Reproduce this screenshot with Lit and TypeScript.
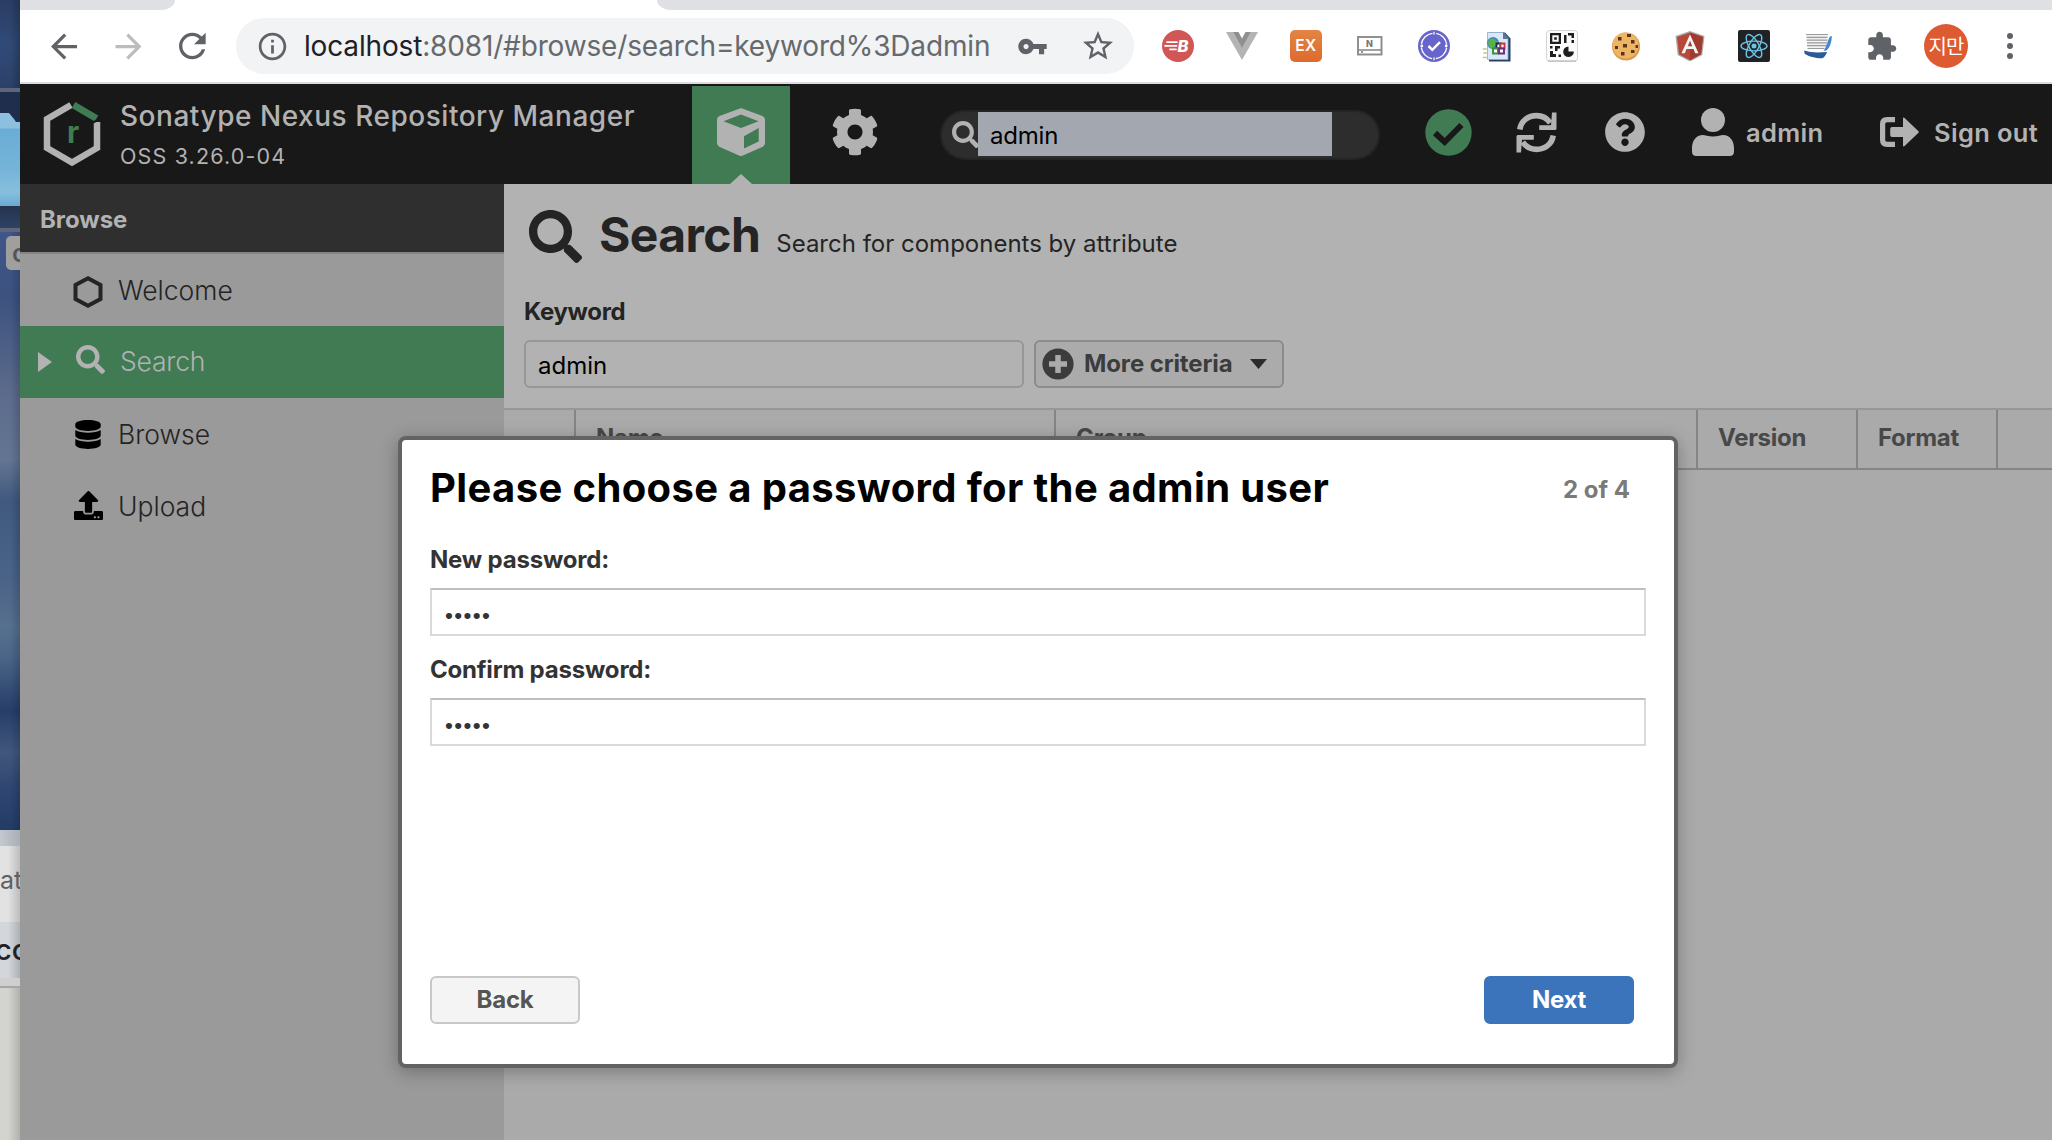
import { LitElement, html, css, svg } from "lit";
import { customElement, property } from "lit/decorators.js";
import { classMap } from "lit/directives/class-map.js";

const SEARCH_PATH =
  "M505 442.7L405.3 343c-4.5-4.5-10.6-7-17-7H372c27.6-35.3 44-79.7 44-128C416 93.1 322.9 0 208 0S0 93.1 0 208s93.1 208 208 208c48.3 0 92.7-16.4 128-44v16.3c0 6.4 2.5 12.5 7 17l99.7 99.7c9.4 9.4 24.6 9.4 33.9 0l28.3-28.3c9.4-9.4 9.4-24.6.1-34zM208 336c-70.7 0-128-57.2-128-128 0-70.7 57.2-128 128-128 70.7 0 128 57.2 128 128 0 70.7-57.2 128-128 128z";

const searchIcon = html`<svg viewBox="0 0 512 512"><path fill="currentColor" d=${SEARCH_PATH} /></svg>`;

const extensions = [
  // red badge with speed lines
  html`<svg width="32" height="32" viewBox="0 0 32 32"><circle cx="16" cy="16" r="16" fill="#d15757" />
    <path d="M5 12.2h10M3 15.8h11.5M8 19.4h6" stroke="#fff" stroke-width="1.7" stroke-linecap="round" />
    <text x="15.5" y="21.8" font-family="Inter, sans-serif" font-size="16.500" font-weight="800" font-style="italic" fill="#fff">B</text></svg>`,
  html`<svg width="32" height="32" viewBox="0 0 32 32"><path d="M0 2h7l9 15.500L25 2h7L16 30z" fill="#b4b4b4" /><path d="M7 2h5.500L16 8.500 19.500 2H25L16 18z" fill="#8f8f8f" /></svg>`,
  html`<svg width="32" height="32" viewBox="0 0 32 32"><defs><linearGradient id="o" x1="0" y1="0" x2="0" y2="1"><stop offset="0" stop-color="#e28544" /><stop offset="1" stop-color="#de6a2d" /></linearGradient></defs>
    <rect width="32" height="32" rx="5" fill="url(#o)" /><text x="16" y="21.400" text-anchor="middle" font-family="Inter, sans-serif" font-size="15.500" font-weight="600" letter-spacing=".6" fill="#fff">EX</text></svg>`,
  html`<svg width="26" height="20" viewBox="0 0 26 20"><rect x="1" y="1" width="23.500" height="17.500" fill="#fff" stroke="#8b8b8b" stroke-width="1.900" /><path d="M1 14h23" stroke="#8b8b8b" stroke-width="1.600" /><circle cx="5" cy="16" r="1" fill="#777" />
    <text x="12.500" y="11" text-anchor="middle" font-family="Inter, sans-serif" font-size="9" font-weight="800" fill="#777">N</text></svg>`,
  html`<svg width="32" height="32" viewBox="0 0 32 32"><circle cx="16" cy="16" r="16" fill="#6764cb" />
    <circle cx="16" cy="16" r="12.800" fill="none" stroke="#fff" stroke-width="1.300" stroke-dasharray="16.100 4" stroke-dashoffset="-2" />
    <path d="M16 1.800v3M16 27.200v3" stroke="#fff" stroke-width="1.200" /><circle cx="3.800" cy="16" r="1.400" fill="#fff" /><circle cx="28.200" cy="16" r="1.400" fill="#fff" />
    <path d="M10.500 16l3.800 3.800 7.700-7.600" fill="none" stroke="#fff" stroke-width="2.500" /></svg>`,
  html`<svg width="32" height="32" viewBox="0 0 32 32"><path d="M7 2.500h16l5.500 6V31.500H7z" fill="#26406c" /><path d="M5.500 2.500h15.500l5 5.500V29.500H5.500z" fill="#dbe8f8" stroke="#8ea9cd" stroke-width=".8" /><path d="M21 2l6.500 7H21z" fill="#5a7796" />
    <circle cx="11" cy="13" r="6" fill="#3f83dc" /><path d="M6 12c3-5 5-4 7-2s4 0 3 3-4 2-5 5-5-2-5-6z" fill="#58b53c" />
    <g fill="#fff" stroke-width="1.900"><path d="M14.500 13.500h4v5h-4z" stroke="#1e2c4a" /><path d="M18.500 13.500h4v5h-4z" stroke="#c53744" /><path d="M11 18.500h5v5h-5z" stroke="#38913a" /><path d="M17 18.500h5v5h-5z" stroke="#6a2e78" /></g>
    <path d="M.8 19h4M1.500 23h4M.8 27.500h4" stroke="#c7c48d" stroke-width="1.400" /></svg>`,
  html`<svg width="32" height="32" viewBox="0 0 32 32"><rect x=".5" y=".5" width="31" height="31" rx="3" fill="#fbfbfb" stroke="#d4d4d4" /><path d="M2 31h28" stroke="#c3c3c3" stroke-width="1.500" />
    <g fill="#1d1d1d"><path d="M4 3h11v11H4zM6.300 5.300v6.400h6.400V5.300z" fill-rule="evenodd" /><path d="M8.200 7.200h2.600v2.600H8.200zM18 5h2.500v8H18zM22 3h6v5h-2.500V5.500H22zM25.500 10H28v3h-2.500zM4 16h2.500v2.500H4zM9 16h5v2.500h-2.500V21H9zM4 21h3v3h3v3H4zM12.500 24.500H15V27h-2.500z" /><path d="M22.500 16.500v5h5.300a5.300 5.300 0 1 1-5.300-5z" /></g></svg>`,
  html`<svg width="30" height="30" viewBox="0 0 30 30"><circle cx="15" cy="15.500" r="14" fill="#d99a4c" /><circle cx="14.500" cy="14.500" r="13" fill="#edb667" /><g fill="#5a3519"><rect x="7" y="6" width="3.500" height="3.500" /><rect x="16" y="3" width="4" height="3" /><rect x="20" y="9" width="3.500" height="3.500" /><rect x="12" y="13" width="4" height="3.500" /><rect x="4" y="15" width="3" height="3" /><rect x="20" y="19" width="3.500" height="3" /><rect x="10" y="21" width="3.500" height="3.500" /><rect x="24.500" y="14" width="2.500" height="3" /></g></svg>`,
  html`<svg width="30" height="30" viewBox="0 0 30 30"><path d="M15 0l14.500 5-2.200 19L15 30.500 2.700 24 .5 5z" fill="#a9a9a9" /><path d="M15 1.500L28 6l-2 17.300L15 29.200 4 23.300 2 6z" fill="#b8473a" /><path d="M15 1.500L28 6l-2 17.300L15 29.200z" fill="#a23a30" />
    <path fill-rule="evenodd" d="M15 3.500L6.500 22.300h3.300l1.700-4.200h7l1.700 4.200h3.300zM12.700 15.200L15 9.700l2.300 5.500z" fill="#f4f4f4" /></svg>`,
  html`<svg width="32" height="32" viewBox="0 0 32 32"><rect width="32" height="32" rx="2" fill="#202224" /><g fill="none" stroke="#6cc3e8" stroke-width="1.400"><ellipse cx="16" cy="16" rx="13" ry="4.900" /><ellipse cx="16" cy="16" rx="13" ry="4.900" transform="rotate(60 16 16)" /><ellipse cx="16" cy="16" rx="13" ry="4.900" transform="rotate(120 16 16)" /></g><circle cx="16" cy="16" r="2.500" fill="#6cc3e8" /></svg>`,
  html`<svg width="30" height="26" viewBox="0 0 30 26"><path d="M3 1h22l-1 15H5z" fill="#f2f2f2" /><path d="M3 1.500h22M3.500 4.300h21M3.500 7.100h21M4 9.900h20M4 12.700h20M4.500 15.500h17" stroke="#9b9b9b" stroke-width="1.200" /><path d="M27 3.500l1.800-.5c0 6-2 12-5.500 14.500L20.500 18c3.500-4 4-11 6.500-14.500z" fill="#4486cb" /><path d="M1 17.500c6 2 13 2.500 23 1.500-1 3-2.500 5-4.500 6.300C13 25.500 6 23.500 1.800 21z" fill="#2a5c99" /></svg>`,
  html`<svg width="32" height="32" viewBox="0.3 -0.4 24 24"><path fill="#5f6368" d="M20.500 11H19V7c0-1.100-.9-2-2-2h-4V3.500C13 2.120 11.880 1 10.500 1S8 2.120 8 3.500V5H4c-1.100 0-1.990.9-1.990 2v3.800H3.500c1.490 0 2.700 1.210 2.700 2.700s-1.210 2.700-2.700 2.700H2V20c0 1.100.9 2 2 2h3.800v-1.500c0-1.490 1.210-2.700 2.700-2.700 1.490 0 2.700 1.210 2.700 2.700V22H17c1.100 0 2-.9 2-2v-4h1.500c1.380 0 2.500-1.120 2.500-2.500S21.880 11 20.500 11z" /></svg>`,
];

@customElement("browser-bar")
class BrowserBar extends LitElement {
  static styles = css`
    :host { display: block; background: #fff; border-bottom: 2px solid #dadce1; }
    .tabs { height: 10px; display: flex; justify-content: space-between; background: #fff; }
    .tab { background: #dee0e4; }
    .before { width: 155px; border-bottom-right-radius: 14px 10px; }
    .after { width: 1395px; border-bottom-left-radius: 14px 10px; }
    .bar { height: 72px; display: flex; align-items: center; padding-left: 12px; }
    .cell { width: 64px; display: flex; justify-content: center; align-items: center; }
    .nav { color: #5f6368; }
    .muted { color: #babcbe; }
    .omni { margin: 0 12px 0 12px; width: 898px; height: 56px; border-radius: 28px; background: #f1f3f4; display: flex; align-items: center; box-sizing: border-box; padding: 0 18px 0 20px; color: #5f6368; }
    .url { margin-left: 15px; flex: 1; font: 400 28px/56px Inter, "Liberation Sans", sans-serif; letter-spacing: -0.160px; color: #66696d; white-space: nowrap; }
    .host { color: #202124; }
    .star { margin-left: 32px; }
    .avatar { width: 44px; height: 44px; border-radius: 50%; background: #de5b32; color: #fff; font: 400 20px/43px "Noto Sans CJK KR", sans-serif; text-align: center; letter-spacing: -1px; }
    .dots { display: flex; flex-direction: column; gap: 4px; }
    .dot { width: 6px; height: 6px; border-radius: 50%; background: #5f6368; }
  `;
  render() {
    return html`
      <div class="tabs"><div class="tab before"></div><div class="tab after"></div></div>
      <div class="bar">
        <div class="cell nav"><svg width="39" height="39" viewBox="0.3 0 24 24"><path fill="currentColor" d="M20 11H7.830l5.590-5.590L12 4l-8 8 8 8 1.410-1.410L7.830 13H20v-2z" /></svg></div>
        <div class="cell nav muted"><svg width="39" height="39" viewBox="0 0 24 24"><path fill="currentColor" d="M12 4l-1.410 1.410L16.170 11H4v2h12.170l-5.580 5.590L12 20l8-8z" /></svg></div>
        <div class="cell nav"><svg width="40" height="40" viewBox="-0.2 0 24 24"><path fill="currentColor" d="M17.650 6.350C16.200 4.900 14.210 4 12 4c-4.420 0-7.990 3.580-7.990 8s3.570 8 7.990 8c3.730 0 6.840-2.550 7.730-6h-2.080c-.82 2.330-3.040 4-5.650 4-3.310 0-6-2.690-6-6s2.690-6 6-6c1.660 0 3.140.69 4.220 1.780L13 11h7V4l-2.350 2.350z" /></svg></div>
        <div class="omni">
          <svg width="33" height="33" viewBox="0 0 24 24"><path fill="currentColor" d="M11 7h2v2h-2zm0 4h2v6h-2zm1-9C6.480 2 2 6.480 2 12s4.480 10 10 10 10-4.480 10-10S17.520 2 12 2zm0 18c-4.410 0-8-3.590-8-8s3.590-8 8-8 8 3.590 8 8-3.590 8-8 8z" /></svg>
          <span class="url"><span class="host">localhost</span>:8081/#browse/search=keyword%3Dadmin</span>
          <svg width="31" height="31" viewBox="0 0 24 24"><path fill="currentColor" d="M12.650 10C11.830 7.670 9.610 6 7 6c-3.310 0-6 2.690-6 6s2.690 6 6 6c2.610 0 4.830-1.670 5.650-4H17v4h4v-4h2v-4H12.650zM7 14c-1.100 0-2-.9-2-2s.9-2 2-2 2 .9 2 2-.9 2-2 2z" /></svg>
          <svg class="star" width="36" height="36" viewBox="0 0 24 24"><path fill="currentColor" d="M22 9.240l-7.190-.62L12 2 9.190 8.630 2 9.240l5.460 4.730L5.820 21 12 17.270 18.180 21l-1.630-7.030L22 9.240zM12 15.400l-3.760 2.270 1-4.280-3.320-2.880 4.380-.38L12 6.100l1.710 4.040 4.380.38-3.320 2.880 1 4.280L12 15.400z" /></svg>
        </div>
        ${extensions.map((e) => html`<div class="cell">${e}</div>`)}
        <div class="cell"><div class="avatar">지만</div></div>
        <div class="cell"><div class="dots"><div class="dot"></div><div class="dot"></div><div class="dot"></div></div></div>
      </div>`;
  }
}

@customElement("nexus-header")
class NexusHeader extends LitElement {
  static styles = css`
    :host { display: flex; align-items: flex-start; height: 100px; background: #181818; color: #b2b2b2; font-family: Inter, "Liberation Sans", sans-serif; }
    svg { display: block; }
    .logo { margin: 17px 0 0 23px; }
    .brand { margin: 15px 0 0 19px; width: 572px; white-space: nowrap; }
    .title { font: 500 28px/34px Inter, sans-serif; letter-spacing: 0.530px; }
    .version { margin-top: 10px; font: 400 21.500px/26px Inter, sans-serif; letter-spacing: 1.150px; }
    .mode { margin-top: 2px; width: 98px; height: 98px; background: #407b54; display: flex; flex-direction: column; align-items: center; justify-content: space-between; padding-top: 22px; box-sizing: border-box; }
    .tip { width: 22px; height: 10px; background: #b2b2b2; clip-path: polygon(50% 0, 100% 100%, 0 100%); }
    .icons { display: flex; align-items: center; height: 96px; }
    .gear { margin-left: 41px; }
    .search { margin: 26px 0 0 61px; width: 440px; height: 50px; border-radius: 25px; background: #2d2d2d; border: 2px solid #242424; box-sizing: border-box; display: flex; }
    .search .glass { width: 27px; height: 27px; margin: 9px 0 0 10px; }
    .field { margin-left: -1px; width: 354px; height: 44px; background: #a3a7b0; color: #000; font: 400 24px/47px Inter, sans-serif; letter-spacing: -0.200px; padding-left: 12px; box-sizing: border-box; }
    .label { font: 600 25.500px/40px Inter, sans-serif; letter-spacing: 0.350px; white-space: nowrap; padding-top: 2px; }
    .check { margin-left: 45px; }
    .refresh { margin-left: 44px; }
    .help { margin-left: 48px; }
    .user { margin-left: 47px; }
    .name { margin-left: 12px; width: 80px; }
    .exit { margin-left: 54px; }
    .out { margin-left: 14px; }
  `;
  render() {
    return html`
      <svg class="logo" width="58" height="66" viewBox="0 0 58 66">
        <path d="M28 4L4 18v29l25 14.500L54 47V21" fill="none" stroke="#b2b2b2" stroke-width="6.500" />
        <path d="M30.500 4L53.500 17.500" stroke="#407b54" stroke-width="7" />
        <path d="M57.500 17.500L50 21.500" stroke="#181818" stroke-width="2" />
        <text x="24" y="42" font-family="Inter, sans-serif" font-weight="700" font-size="30" fill="#407b54">r</text>
      </svg>
      <div class="brand"><div class="title">Sonatype Nexus Repository Manager</div><div class="version">OSS 3.26.0-04</div></div>
      <div class="mode">
        <svg width="48" height="48" viewBox="0 0 48 48"><path fill="#b2b2b2" fill-rule="evenodd" d="M21.500.9q2.500-1.200 5 0L45.500 8Q48 9 48 11.800V35q0 2.500-2.200 3.700L26.500 47.300q-2.500 1.200-5 0L2.200 38.700Q0 37.500 0 35V11.800Q0 9 2.500 8zM24 6.500L6.500 13.300 24 20l17.500-6.700zM27 28.200v12.300l14.700-7V20z" /></svg>
        <div class="tip"></div>
      </div>
      <div class="icons"><svg class="gear" width="48" height="50" viewBox="0 0 512 512"><path fill="currentColor" d="M487.400 315.700l-42.600-24.600c4.300-23.200 4.300-47 0-70.200l42.600-24.600c4.900-2.800 7.100-8.600 5.500-14-11.100-35.600-30-67.800-54.700-94.600-3.800-4.100-10-5.100-14.800-2.300L380.800 110c-17.900-15.400-38.500-27.300-60.800-35.100V25.800c0-5.600-3.900-10.500-9.400-11.700-36.700-8.200-74.300-7.800-109.200 0-5.500 1.200-9.400 6.100-9.400 11.700V75c-22.200 7.900-42.800 19.800-60.800 35.100L88.700 85.500c-4.900-2.800-11-1.900-14.800 2.300-24.700 26.700-43.600 58.900-54.700 94.600-1.700 5.400.6 11.200 5.500 14L67.300 221c-4.300 23.200-4.300 47 0 70.200l-42.600 24.600c-4.900 2.800-7.100 8.600-5.500 14 11.100 35.600 30 67.800 54.700 94.600 3.800 4.100 10 5.100 14.800 2.300l42.600-24.600c17.900 15.400 38.500 27.300 60.800 35.100v49.200c0 5.600 3.900 10.500 9.400 11.700 36.700 8.200 74.300 7.800 109.200 0 5.500-1.200 9.400-6.100 9.400-11.700v-49.200c22.200-7.900 42.800-19.800 60.800-35.100l42.600 24.600c4.900 2.800 11 1.900 14.800-2.300 24.700-26.700 43.600-58.900 54.700-94.600 1.500-5.500-.7-11.300-5.600-14.100zM256 336c-44.100 0-80-35.900-80-80s35.900-80 80-80 80 35.900 80 80-35.900 80-80 80z" /></svg></div>
      <div class="search"><div class="glass">${searchIcon}</div><div class="field">admin</div></div>
      <div class="icons">
        <svg class="check" width="47" height="47" viewBox="0 0 47 47"><circle cx="23.500" cy="23.500" r="23.200" fill="#407b54" /><path d="M10 24l9.700 9L36.500 16" fill="none" stroke="#181818" stroke-width="5.800" stroke-linejoin="miter" /></svg>
        <svg class="refresh" width="41" height="41" viewBox="0 0 41 41"><g fill="none" stroke="currentColor" stroke-width="5.600"><path d="M3.800 17.500C5 9 12 3.600 20.500 3.600c6 0 10.500 2.500 13.800 7.200" /><path d="M37.200 23.500C36 32 29 37.400 20.500 37.400c-6 0-10.500-2.500-13.800-7.200" /></g><path fill="currentColor" d="M36 .5h4.500V16.500q0 1.500-1.500 1.500H23.200v-4.800H35zM5 40.500H.5V24.500Q.5 23 2 23h15.800v4.800H6z" /></svg>
        <svg class="help" width="40" height="40" viewBox="6 6 500 500"><path fill="currentColor" d="M504 256c0 136.997-111.043 248-248 248S8 392.997 8 256C8 119.083 119.043 8 256 8s248 111.083 248 248zM262.655 90c-54.497 0-89.255 22.957-116.549 63.758-3.536 5.286-2.353 12.415 2.715 16.258l34.699 26.310c5.205 3.947 12.621 3.008 16.665-2.122 17.864-22.658 30.113-35.797 57.303-35.797 20.429 0 45.698 13.148 45.698 32.958 0 14.976-12.363 22.667-32.534 33.976C247.128 238.528 216 254.941 216 296v4c0 6.627 5.373 12 12 12h56c6.627 0 12-5.373 12-12v-1.333c0-28.462 83.186-29.647 83.186-106.667 0-58.002-60.165-102-116.531-102zM256 338c-25.365 0-46 20.635-46 46 0 25.364 20.635 46 46 46s46-20.636 46-46c0-25.365-20.635-46-46-46z" /></svg>
        <svg class="user" width="42" height="48" viewBox="0 0 42 48"><circle cx="21" cy="12" r="12" fill="currentColor" /><path fill="currentColor" d="M11 27c2 0 5 1.600 10 1.600S29 27 31 27c7 0 11 6 11 13v3.500q0 4.500-4.500 4.500h-33Q0 48 0 43.500V40c0-7 4-13 11-13z" /></svg>
        <div class="label name">admin</div>
        <svg class="exit" width="40" height="30" viewBox="0 0 40 30"><path d="M15 2.600H7Q2.600 2.600 2.600 7v16q0 4.400 4.400 4.400h8" fill="none" stroke="currentColor" stroke-width="5.200" /><path fill="currentColor" d="M12 10h11V1.500q0-1.500 1.600-.6L38.500 14.200q.9.800 0 1.600L24.600 29.100q-1.600.9-1.600-.6V20H12q-1.800 0-1.800-1.800v-6.400Q10.200 10 12 10z" /></svg>
        <div class="label out">Sign out</div>
      </div>`;
  }
}

const sideItems = [
  { label: "Welcome", cls: "welcome", icon: html`<svg width="30" height="32" viewBox="0 0 30 32"><path d="M15 2.300L27.500 9v14L15 29.700 2.500 23V9z" fill="none" stroke="#242424" stroke-width="4" /></svg>` },
  { label: "Search", cls: "active", icon: html`<svg width="29" height="29" viewBox="0 0 512 512"><path fill="#b2b2b2" d=${SEARCH_PATH} /></svg>` },
  { label: "Browse", cls: "browse", icon: html`<svg width="26" height="29" viewBox="0 0 448 512"><path d="M448 73.143v45.714C448 159.143 347.667 192 224 192S0 159.143 0 118.857V73.143C0 32.857 100.333 0 224 0s224 32.857 224 73.143zM448 176v102.857C448 319.143 347.667 352 224 352S0 319.143 0 278.857V176c48.125 33.143 136.208 48.572 224 48.572S399.874 209.143 448 176zm0 160v102.857C448 479.143 347.667 512 224 512S0 479.143 0 438.857V336c48.125 33.143 136.208 48.572 224 48.572S399.874 369.143 448 336z" /></svg>` },
  { label: "Upload", cls: "upload", icon: html`<svg width="29" height="29" viewBox="0 0 512 512"><path d="M296 384h-80c-13.300 0-24-10.700-24-24V192h-87.700c-17.800 0-26.700-21.500-14.100-34.100L242.300 5.700c7.500-7.500 19.800-7.500 27.300 0l152.200 152.200c12.600 12.600 3.700 34.100-14.100 34.100H320v168c0 13.300-10.700 24-24 24zm216-8v112c0 13.300-10.700 24-24 24H24c-13.300 0-24-10.700-24-24V376c0-13.300 10.700-24 24-24h136v8c0 30.900 25.100 56 56 56h80c30.900 0 56-25.100 56-56v-8h136c13.300 0 24 10.700 24 24zm-124 88c0-11-9-20-20-20s-20 9-20 20 9 20 20 20 20-9 20-20zm64 0c0-11-9-20-20-20s-20 9-20 20 9 20 20 20 20-9 20-20z" /></svg>` },
];

@customElement("nexus-sidebar")
class NexusSidebar extends LitElement {
  static styles = css`
    :host { display: block; background: #9a9a9a; font-family: Inter, "Liberation Sans", sans-serif; color: #242424; }
    .head { height: 65px; padding: 3px 0 0 20px; background: #2f2f2f; border-bottom: 2px solid #858585; font: 700 24px/65px Inter, sans-serif; letter-spacing: -0.050px; color: #b2b2b2; }
    .item { height: 72px; display: flex; align-items: center; font: 350 26.500px/72px Inter, sans-serif; }
    .arrow { width: 14px; height: 20px; margin: 0 20px 0 18px; }
    .active .arrow { background: #b2b2b2; clip-path: polygon(0 0, 100% 50%, 0 100%); }
    .icon { width: 32px; display: flex; justify-content: center; }
    .text { margin-left: 14px; }
    .active { background: #407b54; color: #b2b2b2; }
    .active .icon { margin: 0 0 6px 2px; }
    .active .text { margin: 0 0 3px 14px; letter-spacing: -0.200px; }
    .welcome .icon { margin-top: 4px; }
    .upload .icon { margin-top: -1px; }
  `;
  render() {
    return html`<div class="head">Browse</div>
      ${sideItems.map((i) => html`<div class=${classMap({ item: true, [i.cls]: true })}><div class="arrow"></div><div class="icon">${i.icon}</div><div class="text">${i.label}</div></div>`)}`;
  }
}

@customElement("search-panel")
class SearchPanel extends LitElement {
  static styles = css`
    :host { display: block; background: #aaa; font-family: Inter, "Liberation Sans", sans-serif; color: #242424; }
    .top { height: 224px; background: #b2b2b2; box-sizing: border-box; padding: 23px 0 0 20px; }
    .title { height: 90px; display: flex; align-items: baseline; }
    .glass { width: 53px; height: 53px; align-self: flex-start; margin: 3px 17px 0 5px; }
    h1 { margin: 0; font: 700 48px/56px Inter, sans-serif; letter-spacing: -0.600px; }
    .sub { margin-left: 16px; font: 400 24px/30px Inter, sans-serif; }
    .key { font: 700 24px/30px Inter, sans-serif; letter-spacing: -0.350px; }
    .row { margin-top: 13px; display: flex; gap: 10px; }
    .input { width: 500px; height: 48px; box-sizing: border-box; border: 2px solid #979797; border-radius: 6px; padding: 2px 0 0 12px; font: 400 24px/44px Inter, sans-serif; color: #000; }
    .more { width: 250px; height: 48px; box-sizing: border-box; border: 2px solid #8b8b8b; border-radius: 6px; background: #ababab; display: flex; align-items: center; padding-left: 6px; font: 700 24px/44px Inter, sans-serif; letter-spacing: -0.120px; color: #3c3c3c; }
    .more span { margin: 0 0 0 10px; width: 148px; white-space: nowrap; }
    .caret { margin-left: 18px; width: 17px; height: 10px; background: #2c2c2c; clip-path: polygon(0 0, 100% 0, 50% 100%); }
    .table { display: grid; grid-template-columns: 72px 480px 642px 160px 140px 1fr; height: 58px; border-top: 2px solid #979797; border-bottom: 2px solid #858585; font: 700 24px/55px Inter, sans-serif; color: #484848; }
    .th { border-right: 2px solid #858585; padding-left: 20px; height: 58px; box-sizing: border-box; letter-spacing: -0.300px; }
    .th:last-child { border: 0; }
  `;
  render() {
    return html`
      <div class="top">
        <div class="title"><div class="glass">${searchIcon}</div><h1>Search</h1><div class="sub">Search for components by attribute</div></div>
        <div class="key">Keyword</div>
        <div class="row">
          <div class="input">admin</div>
          <div class="more"><svg width="32" height="32" viewBox="0 0 32 32"><circle cx="16" cy="16" r="15.600" fill="#3c3c3c" /><path d="M16 7v18M7 16h18" stroke="#ababab" stroke-width="5.500" /></svg><span>More criteria</span><div class="caret"></div></div>
        </div>
      </div>
      <div class="table">${["", "Name", "Group", "Version", "Format", ""].map((h) => html`<div class="th">${h}</div>`)}</div>`;
  }
}

@customElement("password-dialog")
class PasswordDialog extends LitElement {
  @property() step = "2 of 4";
  static styles = css`
    :host { display: flex; flex-direction: column; box-sizing: border-box; width: 1280px; height: 632px; background: #fff; border: 4px solid #636363; border-radius: 8px; box-shadow: 0 4px 18px rgba(0, 0, 0, 0.28); padding: 24px 28px 40px; font-family: Inter, "Liberation Sans", sans-serif; color: #333; }
    .head { display: flex; justify-content: space-between; height: 81px; }
    h2 { margin: 0; font: 700 40px/48px Inter, sans-serif; letter-spacing: 0.370px; color: #000; }
    .step { margin: 2px 16px 0 0; font: 700 24px/48px Inter, sans-serif; letter-spacing: 0; color: #7a7a7a; }
    label { font: 700 24px/30px Inter, sans-serif; letter-spacing: -0.200px; }
    .field { height: 48px; box-sizing: border-box; margin: 13px 0 19px; border: 2px solid #d9d9d9; border-top-color: #bfbfbf; padding: 6px 0 0 13px; font: 400 22.500px/40px "Liberation Sans", sans-serif; letter-spacing: 1.350px; color: #333; }
    .foot { margin-top: auto; display: flex; justify-content: space-between; padding-right: 12px; }
    .btn { width: 150px; height: 48px; box-sizing: border-box; border: 2px solid #c8c8c8; border-radius: 6px; background: #f4f4f4; text-align: center; font: 700 24px/44px Inter, sans-serif; letter-spacing: -0.250px; color: #555; }
    .primary { background: #3c74bc; border-color: #3c74bc; color: #fff; }
  `;
  render() {
    return html`
      <div class="head"><h2>Please choose a password for the admin user</h2><div class="step">${this.step}</div></div>
      <label>New password:</label><div class="field">•••••</div>
      <label>Confirm password:</label><div class="field">•••••</div>
      <div class="foot"><div class="btn">Back</div><div class="btn primary">Next</div></div>`;
  }
}

@customElement("app-root")
class AppRoot extends LitElement {
  static styles = css`
    :host { display: block; position: relative; width: 2052px; height: 1140px; overflow: hidden; }
    .page { display: grid; grid-template-columns: 20px 1fr; height: 1140px; }
    .desk { display: flex; flex-direction: column; overflow: hidden; background: linear-gradient(90deg, transparent 40%, rgba(0, 0, 0, 0.16)), #d3d3cf; font-family: Inter, "Liberation Sans", sans-serif; }
    .desk > div { flex: none; overflow: hidden; white-space: nowrap; }
    .sky { height: 88px; background: linear-gradient(90deg, transparent 50%, rgba(0, 0, 0, 0.2)), linear-gradient(#2b3d63, #304a78 50%, #2c4168); }
    .line { height: 4px; background: #5e6679; }
    .dark { height: 21px; background: #1f2e4c; }
    .folder { height: 93px; background: linear-gradient(#8cc0de 15px, #69add6 16px, #75b4d8 60%, #86bfdd 86%, #6ba9d0); clip-path: polygon(0 0, 9px 0, 14px 6px, 16px 9px, 20px 9px, 20px 100%, 0 100%); }
    .upper { background: #1f2e4c; }
    .shade { height: 22px; background: linear-gradient(#24344f, #2f4263); }
    .sea { height: 598px; box-sizing: border-box; padding: 4px 0 0 6px; background: linear-gradient(90deg, transparent 50%, rgba(0, 0, 0, 0.16)), linear-gradient(#3f5688, #3c5280 11%, #5c6b8c 27%, #647593 38%, #40597f 45%, #4a6388 58%, #56708f 66%, #4b6588 71%, #263e6a 80%, #41577c 87%, #2f4672 93%, #223c66); }
    .tag { width: 20px; height: 34px; border-radius: 5px; background: #9f9fa0; color: #565656; font-size: 25px; line-height: 35px; text-indent: 6px; font-weight: 600; }
    .strip { height: 16px; background: linear-gradient(90deg, #c3c9cf, #a9afb4); }
    .tabname { height: 76px; background: linear-gradient(90deg, #e2e2e2 40%, #bdbdbd); color: #5f6061; font-size: 25px; line-height: 68px; }
    .addr { height: 56px; background: linear-gradient(90deg, #d3d7db 40%, #aeb1b4); color: #202124; font: 500 29px/56px Inter, sans-serif; text-indent: -5px; }
    .gap { height: 8px; background: #cfcfcf; }
    .rule { height: 2px; background: #a6a6a9; }
    .window { display: grid; grid-template-rows: auto auto 1fr; }
    .body { display: grid; grid-template-columns: 484px 1fr; }
    .modal { position: absolute; left: 398px; top: 436px; }
  `;
  render() {
    return html`
      <div class="page">
        <div class="desk">
          <div class="sky"></div><div class="line"></div><div class="dark"></div><div class="upper"><div class="folder"></div></div><div class="shade"></div><div class="line"></div>
          <div class="sea"><div class="tag">c</div></div>
          <div class="strip"></div><div class="tabname">at</div><div class="addr">co</div><div class="gap"></div><div class="rule"></div>
        </div>
        <div class="window">
          <browser-bar></browser-bar>
          <nexus-header></nexus-header>
          <div class="body"><nexus-sidebar></nexus-sidebar><search-panel></search-panel></div>
        </div>
      </div>
      <password-dialog class="modal"></password-dialog>`;
  }
}
